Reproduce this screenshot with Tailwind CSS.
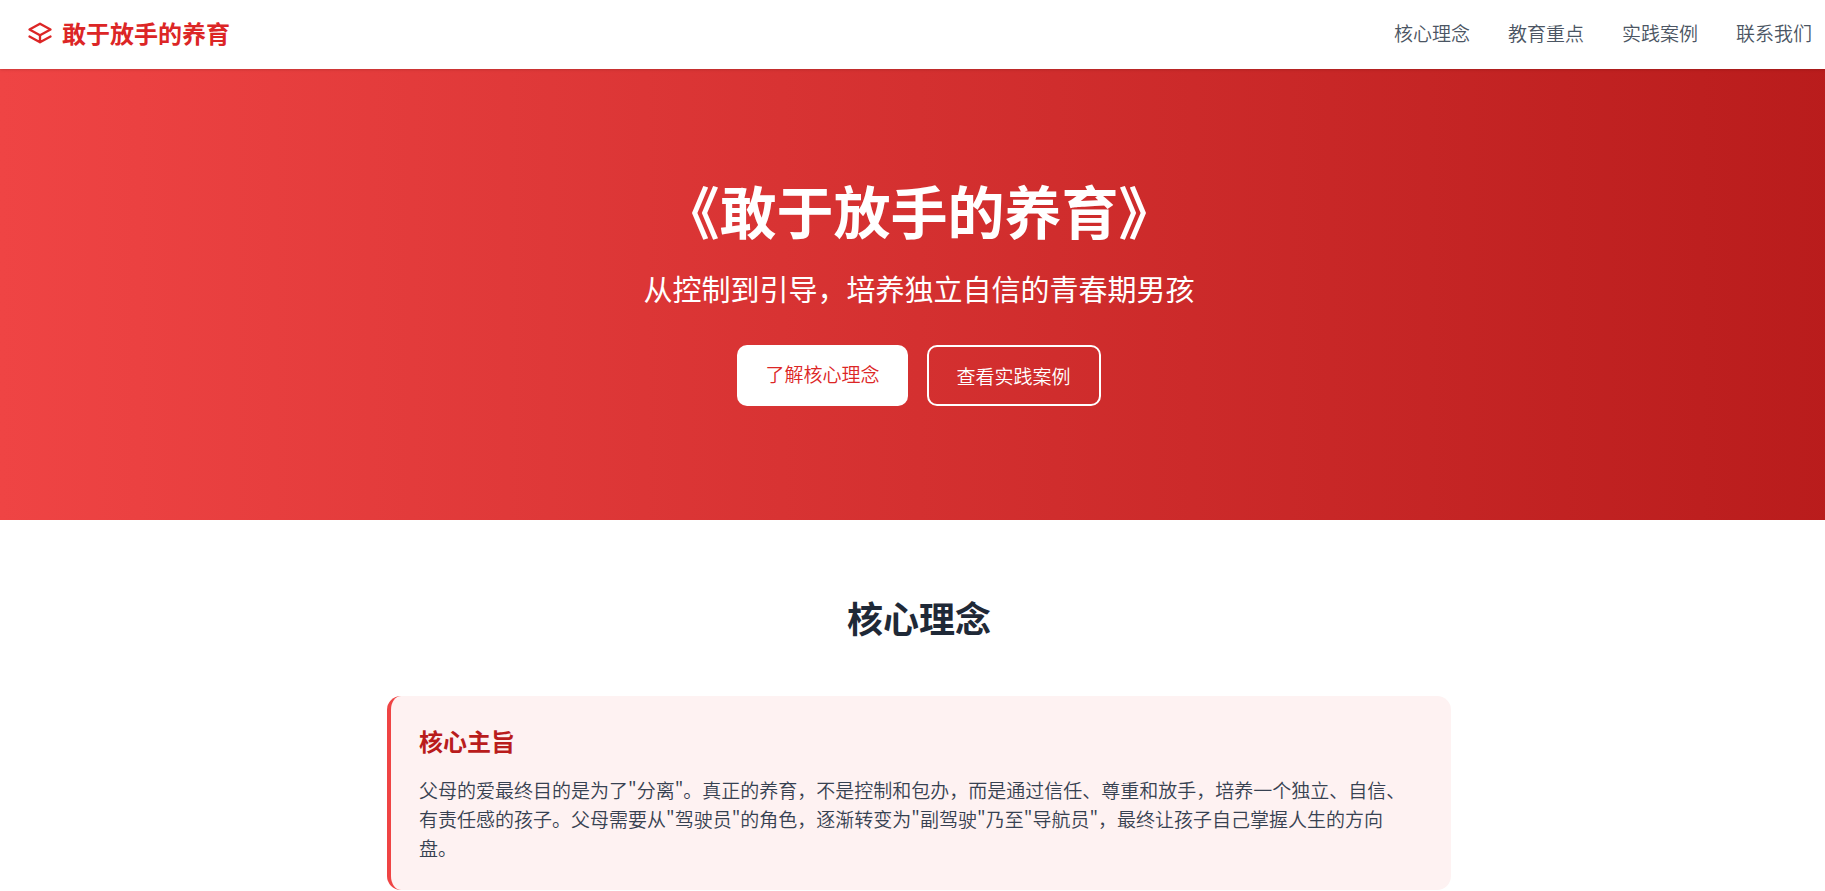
<!DOCTYPE html>
<html lang="zh-CN">
<head>
    <meta charset="UTF-8">
    <meta name="viewport" content="width=device-width, initial-scale=1.0">
    <title>敢于放手的养育</title>
    <script src="https://cdn.jsdelivr.net/npm/@tailwindcss/browser@4"></script>
</head>
<body class="bg-white text-[#1f2937] font-['Noto_Sans_CJK_SC',sans-serif] overflow-x-hidden">
    <div class="w-[calc(100%+13px)]">
        <!-- 导航栏 -->
        <nav class="relative bg-white shadow-sm">
            <div class="flex items-center justify-between px-[26px] pt-4 pb-5">
                <a href="#" class="flex items-center gap-2 text-[#dc2626]">
                    <svg class="w-7 h-7" fill="none" stroke="currentColor" stroke-width="2" stroke-linejoin="round" stroke-linecap="round" viewBox="0 0 24 24">
                        <path d="M12 14l9-5-9-5-9 5 9 5z"/>
                        <path d="M12 14v6M3 15l9 5 9-5"/>
                    </svg>
                    <span class="text-[24px] leading-[33px] font-bold">敢于放手的养育</span>
                </a>
                <div class="flex gap-[38px] text-[#4b5563] text-[19px] leading-[29px] font-[350]">
                    <a href="#core">核心理念</a>
                    <a href="#focus">教育重点</a>
                    <a href="#cases">实践案例</a>
                    <a href="#contact">联系我们</a>
                </div>
            </div>
        </nav>

        <!-- 主横幅 -->
        <header class="bg-linear-to-r/srgb from-[#ef4444] to-[#b91c1c] text-white text-center pt-28 pb-[114px]">
            <h1 class="text-[57px] leading-[57px] font-bold">《敢于放手的养育》</h1>
            <p class="text-[29px] leading-[38px] mt-[31px]">从控制到引导，培养独立自信的青春期男孩</p>
            <div class="flex justify-center gap-[19px] mt-[38px] text-[19px] leading-[29px] font-[350]">
                <a href="#core" class="bg-white text-[#dc2626] px-7 py-3.5 rounded-[10px]">了解核心理念</a>
                <a href="#cases" class="border-2 border-white px-7 py-3.5 rounded-[10px]">查看实践案例</a>
            </div>
        </header>

        <!-- 核心理念 -->
        <section id="core" class="py-[76px]">
            <h2 class="text-[36px] leading-[43px] font-bold text-center">核心理念</h2>
            <div class="max-w-[1064px] mx-auto mt-[57px] bg-[#fef2f2] border-l-4 border-[#ef4444] rounded-[14px] p-7 pr-8">
                <h3 class="text-[24px] leading-[33px] font-bold text-[#b91c1c]">核心主旨</h3>
                <p class="mt-[18px] text-[19px] leading-[29px] font-[350] text-[#374151]">父母的爱最终目的是为了"分离"。真正的养育，不是控制和包办，而是通过信任、尊重和放手，培养一个独立、自信、有责任感的孩子。父母需要从"驾驶员"的角色，逐渐转变为"副驾驶"乃至"导航员"，最终让孩子自己掌握人生的方向盘。</p>
            </div>
        </section>
    </div>
</body>
</html>
